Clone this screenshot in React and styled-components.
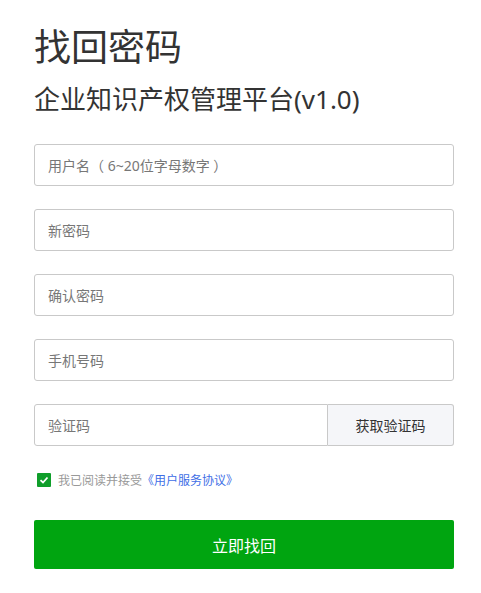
import styled, { createGlobalStyle } from "styled-components";

const Global = createGlobalStyle`
    body {
        margin: 0;
        background: #fff;
        font-family: "Noto Sans", "Noto Sans CJK SC", sans-serif;
    }
`

const fields = ["用户名（ 6~20位字母数字 ）", "新密码", "确认密码", "手机号码"]

const App = () => {
    return (
        <Page>
            <Global />
            <Title>找回密码</Title>
            <SubTitle>企业知识产权管理平台(v1.0)</SubTitle>
            <Form>
                {fields.map((f) => (
                    <Input key={f} placeholder={f} />
                ))}
                <CodeRow>
                    <Input placeholder="验证码" $joined />
                    <CodeButton type="button">获取验证码</CodeButton>
                </CodeRow>
                <Agree>
                    <Check>
                        <svg width="10" height="10" viewBox="0 0 10 10">
                            <path d="M1.5 5.2 L4 7.5 L8.5 2.5" fill="none" stroke="#fff" strokeWidth="1.8" />
                        </svg>
                    </Check>
                    我已阅读并接受<Link>《用户服务协议》</Link>
                </Agree>
                <Submit type="button">立即找回</Submit>
            </Form>
        </Page>
    )
}

const Page = styled.div`
    width: 420px;
    padding: 22px 34px 20px;
`

const Title = styled.h1`
    margin: 0;
    font-size: 37px;
    font-weight: normal;
    color: #333;
    line-height: 50px;
`

const SubTitle = styled.h2`
    margin: 9px 0 0;
    font-size: 26px;
    font-weight: normal;
    color: #333;
    line-height: 36px;
`

const Form = styled.div`
    display: flex;
    flex-direction: column;
    gap: 23px;
    margin-top: 27px;
`

const Input = styled.input`
    box-sizing: border-box;
    width: 100%;
    height: 42px;
    border: 1px solid #c9c9c9;
    border-radius: ${(p) => (p.$joined ? "3px 0 0 3px" : "3px")};
    padding: 0 13px;
    font-family: inherit;
    font-size: 14px;
    color: #333;
    outline: none;
    &::placeholder {
        color: #777;
    }
`

const CodeRow = styled.div`
    display: flex;
`

const CodeButton = styled.button`
    flex: 0 0 126px;
    height: 42px;
    border: 1px solid #c9c9c9;
    border-left: none;
    border-radius: 0 3px 3px 0;
    background: #f5f6f9;
    font-family: inherit;
    font-size: 14px;
    color: #333;
`

const Agree = styled.div`
    display: flex;
    align-items: center;
    height: 17px;
    font-size: 12px;
    color: #999;
    margin-top: 2px;
    padding-left: 3px;
`

const Check = styled.span`
    display: inline-flex;
    align-items: center;
    justify-content: center;
    width: 14px;
    height: 14px;
    background: #0f9e2a;
    border-radius: 1px;
    margin-right: 7px;
`

const Link = styled.span`
    color: #3e6ee6;
`

const Submit = styled.button`
    height: 49px;
    margin-top: 9px;
    border: none;
    border-radius: 2px;
    background: #00a510;
    color: #fff;
    font-family: inherit;
    font-size: 16px;
`

export default App;
